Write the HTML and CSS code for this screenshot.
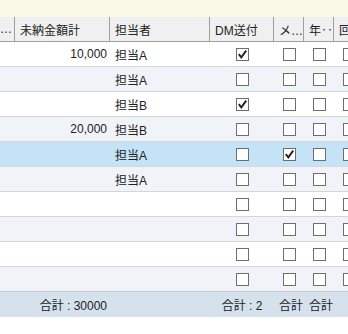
FILE: index.html
```html
<!DOCTYPE html>
<html lang="ja">
<head>
    <meta charset="UTF-8">
    <title>一覧</title>
    <link rel="stylesheet" href="styles.css">
</head>
<body>
    <div class="notice"></div>
    <div class="grid">
        <div class="row head">
            <div class="cell c0">…</div>
            <div class="cell c1">未納金額計</div>
            <div class="cell c2">担当者</div>
            <div class="cell c3">DM送付</div>
            <div class="cell c4">メ…</div>
            <div class="cell c5">年‥</div>
            <div class="cell c6">回</div>
        </div>

        <div class="row">
            <div class="cell c0"></div>
            <div class="cell c1 num">10,000</div>
            <div class="cell c2">担当A</div>
            <div class="cell c3 chk"><span class="box on"></span></div>
            <div class="cell c4 chk"><span class="box"></span></div>
            <div class="cell c5 chk"><span class="box"></span></div>
            <div class="cell c6 chk"><span class="box"></span></div>
        </div>
        <div class="row alt">
            <div class="cell c0"></div>
            <div class="cell c1 num"></div>
            <div class="cell c2">担当A</div>
            <div class="cell c3 chk"><span class="box"></span></div>
            <div class="cell c4 chk"><span class="box"></span></div>
            <div class="cell c5 chk"><span class="box"></span></div>
            <div class="cell c6 chk"><span class="box"></span></div>
        </div>
        <div class="row">
            <div class="cell c0"></div>
            <div class="cell c1 num"></div>
            <div class="cell c2">担当B</div>
            <div class="cell c3 chk"><span class="box on"></span></div>
            <div class="cell c4 chk"><span class="box"></span></div>
            <div class="cell c5 chk"><span class="box"></span></div>
            <div class="cell c6 chk"><span class="box"></span></div>
        </div>
        <div class="row alt">
            <div class="cell c0"></div>
            <div class="cell c1 num">20,000</div>
            <div class="cell c2">担当B</div>
            <div class="cell c3 chk"><span class="box"></span></div>
            <div class="cell c4 chk"><span class="box"></span></div>
            <div class="cell c5 chk"><span class="box"></span></div>
            <div class="cell c6 chk"><span class="box"></span></div>
        </div>
        <div class="row selected">
            <div class="cell c0"></div>
            <div class="cell c1 num"></div>
            <div class="cell c2">担当A</div>
            <div class="cell c3 chk"><span class="box"></span></div>
            <div class="cell c4 chk"><span class="box on"></span></div>
            <div class="cell c5 chk"><span class="box"></span></div>
            <div class="cell c6 chk"><span class="box"></span></div>
        </div>
        <div class="row alt">
            <div class="cell c0"></div>
            <div class="cell c1 num"></div>
            <div class="cell c2">担当A</div>
            <div class="cell c3 chk"><span class="box"></span></div>
            <div class="cell c4 chk"><span class="box"></span></div>
            <div class="cell c5 chk"><span class="box"></span></div>
            <div class="cell c6 chk"><span class="box"></span></div>
        </div>
        <div class="row">
            <div class="cell c0"></div>
            <div class="cell c1"></div>
            <div class="cell c2"></div>
            <div class="cell c3 chk"><span class="box"></span></div>
            <div class="cell c4 chk"><span class="box"></span></div>
            <div class="cell c5 chk"><span class="box"></span></div>
            <div class="cell c6 chk"><span class="box"></span></div>
        </div>
        <div class="row alt">
            <div class="cell c0"></div>
            <div class="cell c1"></div>
            <div class="cell c2"></div>
            <div class="cell c3 chk"><span class="box"></span></div>
            <div class="cell c4 chk"><span class="box"></span></div>
            <div class="cell c5 chk"><span class="box"></span></div>
            <div class="cell c6 chk"><span class="box"></span></div>
        </div>
        <div class="row">
            <div class="cell c0"></div>
            <div class="cell c1"></div>
            <div class="cell c2"></div>
            <div class="cell c3 chk"><span class="box"></span></div>
            <div class="cell c4 chk"><span class="box"></span></div>
            <div class="cell c5 chk"><span class="box"></span></div>
            <div class="cell c6 chk"><span class="box"></span></div>
        </div>
        <div class="row alt">
            <div class="cell c0"></div>
            <div class="cell c1"></div>
            <div class="cell c2"></div>
            <div class="cell c3 chk"><span class="box"></span></div>
            <div class="cell c4 chk"><span class="box"></span></div>
            <div class="cell c5 chk"><span class="box"></span></div>
            <div class="cell c6 chk"><span class="box"></span></div>
        </div>

        <div class="row foot">
            <div class="cell c0"></div>
            <div class="cell c1 num">合計 : 30000</div>
            <div class="cell c2"></div>
            <div class="cell c3 mid">合計 : 2</div>
            <div class="cell c4 clip">合計</div>
            <div class="cell c5 clip">合計</div>
            <div class="cell c6 clip"></div>
        </div>
    </div>
</body>
</html>
```

FILE: styles.css
```css
body {
    margin: 0;
    font-family: "Liberation Sans", "Noto Sans CJK JP", sans-serif;
    font-size: 12px;
    color: #222;
    background: #fff;
    overflow: hidden;
}

.notice {
    height: 17px;
    background: #f8f8e6;
}

.grid {
    width: 364px;
}

.row {
    display: grid;
    grid-template-columns: 15px 95px 100px 64px 30px 30px 30px;
    height: 25px;
    box-sizing: border-box;
    border-bottom: 1px solid #d6d6d6;
    background: #fff;
}
.row.alt {
    background: #f0f4f8;
}
.row.selected {
    background: #c4e3f7;
}

.cell {
    display: flex;
    align-items: center;
    padding: 0 5px;
    overflow: hidden;
    white-space: nowrap;
}
.cell.num {
    justify-content: flex-end;
    padding-right: 3px;
}
.cell.chk,
.cell.mid {
    justify-content: center;
}
.cell.clip {
    padding: 0 1px 0 5px;
}

/* ヘッダー */
.row.head {
    background: #f0f0f0;
    border-bottom: 1px solid #a0a0a0;
}
.row.head .cell {
    border-right: 1px solid #a0a0a0;
    padding-left: 5px;
}
.row.head .c0 {
    padding: 0;
    justify-content: flex-start;
}

/* フッター */
.row.foot {
    background: #d5e1ed;
    border-top: 1px solid #c8c8c8;
    border-bottom: none;
    margin-top: -1px;
    height: 26px;
}

.box {
    display: block;
    width: 13px;
    height: 13px;
    box-sizing: border-box;
    border: 1px solid #6e6e6e;
    background: #fff;
}
.box.on {
    background: #fff url("data:image/svg+xml,%3Csvg xmlns='http://www.w3.org/2000/svg' width='11' height='11'%3E%3Cpath d='M1.8 5.2 L4.3 8.4 L9.2 1.6' fill='none' stroke='%23222' stroke-width='1.9'/%3E%3C/svg%3E") no-repeat center;
}
```
